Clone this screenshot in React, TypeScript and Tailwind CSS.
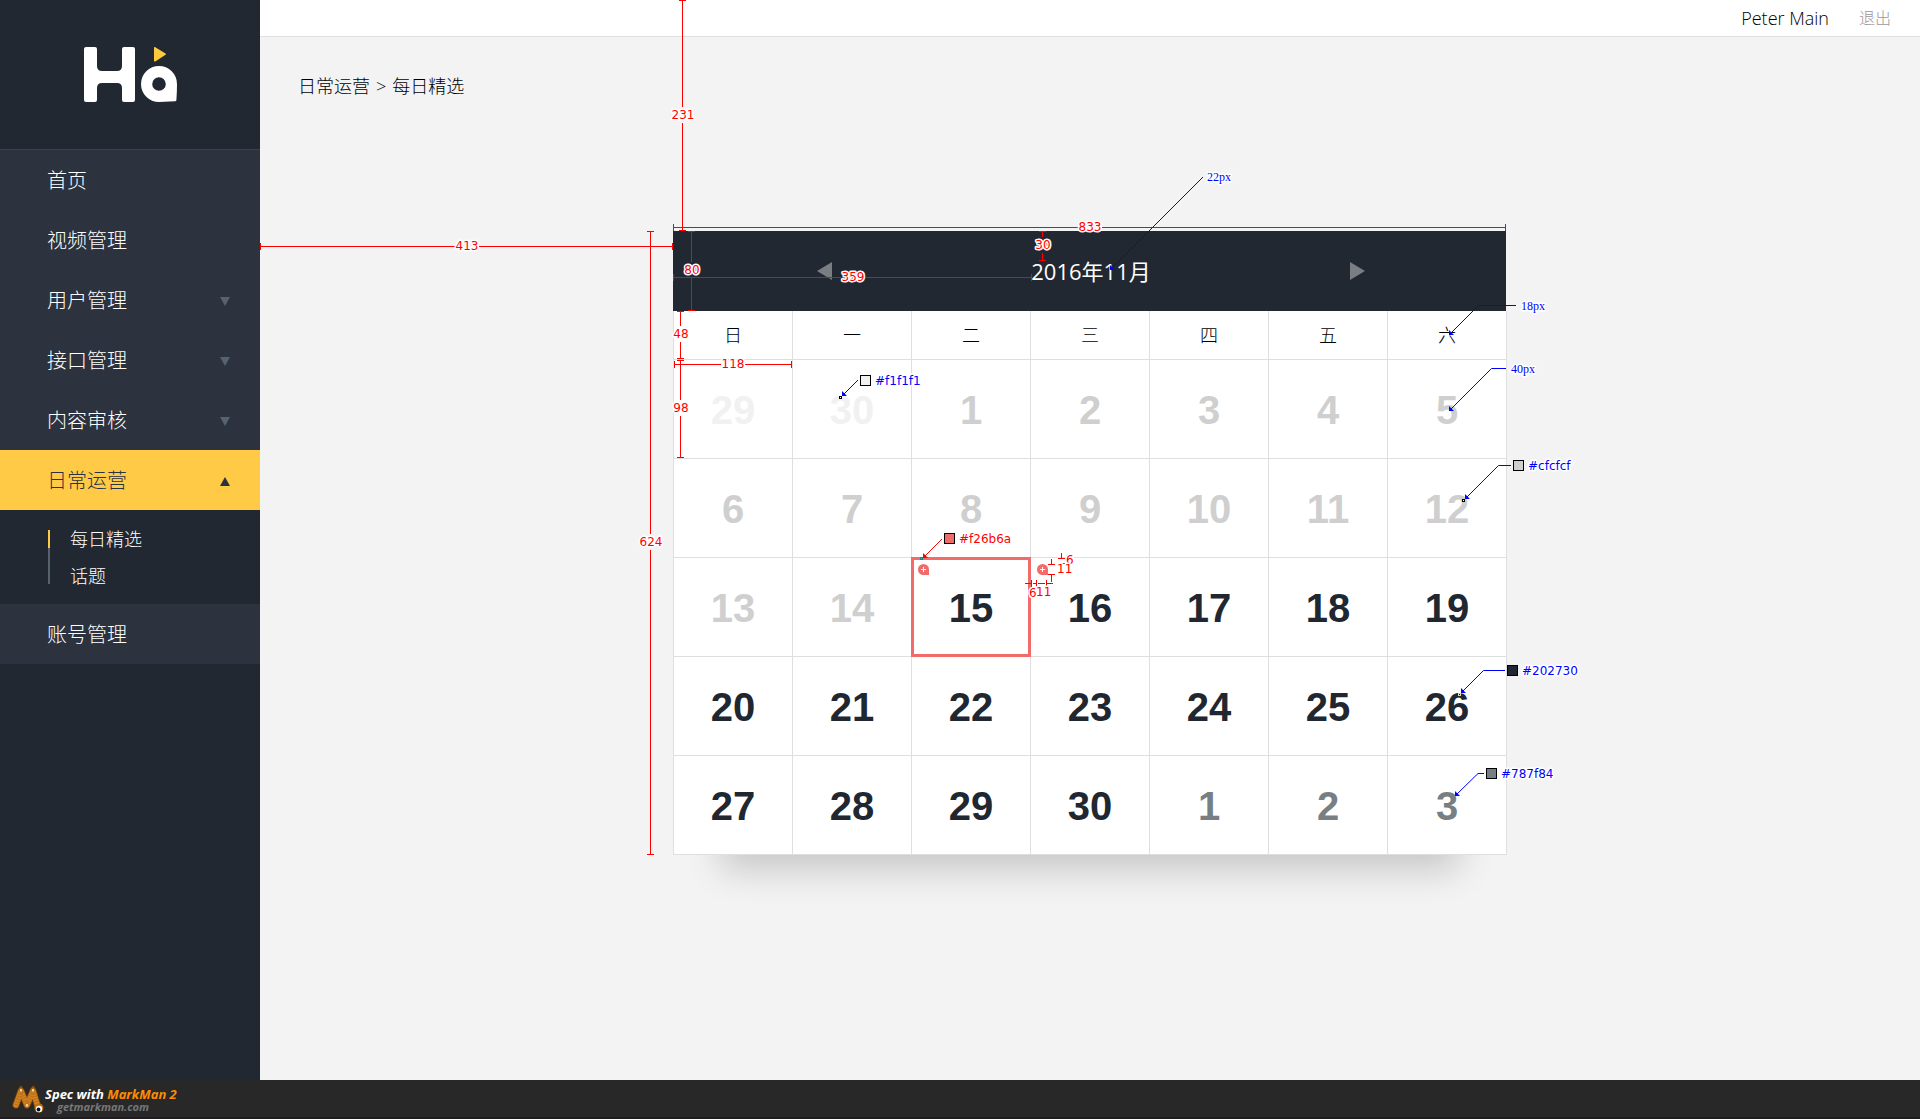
import type { ReactNode } from 'react';

const MENU_TOP = [
  { label: '首页', expandable: false },
  { label: '视频管理', expandable: false },
  { label: '用户管理', expandable: true },
  { label: '接口管理', expandable: true },
  { label: '内容审核', expandable: true },
];

const WEEKDAYS = ['日', '一', '二', '三', '四', '五', '六'];

type Tone = 'faint' | 'past' | 'open' | 'next';
type Day = { n: number; tone: Tone; selected?: boolean; add?: boolean };

const TONES: Record<Tone, string> = {
  faint: 'text-[#f1f1f1]',
  past: 'text-[#cfcfcf]',
  open: 'text-[#202730]',
  next: 'text-[#787f84]',
};

const range = (from: number, to: number, tone: Tone): Day[] =>
  Array.from({ length: to - from + 1 }, (_, i) => ({ n: from + i, tone }));

const DAYS: Day[] = [
  ...range(29, 30, 'faint'),
  ...range(1, 14, 'past'),
  { n: 15, tone: 'open', selected: true, add: true },
  { n: 16, tone: 'open', add: true },
  ...range(17, 30, 'open'),
  ...range(1, 3, 'next'),
];

const WEEKS = [0, 1, 2, 3, 4].map((w) => DAYS.slice(w * 7, w * 7 + 7));

function Logo() {
  return (
    <svg viewBox="0 0 94 56" className="h-14 w-[94px]" role="img" aria-label="Ha">
      <path
        fill="#fff"
        d="M2 0h9q2 0 2 2v17q0 5 5 5h15q5 0 5-5V2q0-2 2-2h9q2 0 2 2v51q0 2-2 2h-9q-2 0-2-2V41q0-5-5-5H18q-5 0-5 5v12q0 2-2 2H2q-2 0-2-2V2q0-2 2-2z"
      />
      <path
        fill="#fff"
        fillRule="evenodd"
        d="M75 19a18 18 0 0 1 18 18q0 8-.6 16 0 1.300-1.400 1.300L75 55a18 18 0 0 1 0-36zm0 11.200a6.800 6.800 0 1 0 0 13.600 6.800 6.800 0 0 0 0-13.600z"
      />
      <path fill="#ffc93c" d="M70 1q0-1.500 1.300-.8L81.500 6.600q.9.600 0 1.200L71.300 14.400q-1.300.7-1.300-.8z" />
    </svg>
  );
}

function Triangle({ up = false }: { up?: boolean }) {
  return (
    <svg viewBox="0 0 10 9" className="h-[9px] w-2.5" aria-hidden="true">
      <path d={up ? 'M0 9 5 0l5 9z' : 'M0 0h10L5 9z'} fill={up ? '#2c323e' : '#57626f'} />
    </svg>
  );
}

function MenuItem({ label, expandable }: { label: string; expandable: boolean }) {
  const box = 'flex h-15 w-full items-center justify-between bg-[#2c333e] pt-0.5 pr-[30px] pl-[47px] text-xl font-light text-white';
  if (expandable) {
    return (
      <button type="button" aria-expanded="false" className={box}>
        {label}
        <Triangle />
      </button>
    );
  }
  return (
    <a href="#" className={box}>
      {label}
    </a>
  );
}

function Sidebar() {
  return (
    <aside className="w-65 shrink-0 bg-[#212831]">
      <div className="flex h-[150px] items-center justify-center border-b border-[#3a424e] pl-0.5">
        <Logo />
      </div>
      <nav>
        {MENU_TOP.map((m) => (
          <MenuItem key={m.label} {...m} />
        ))}
        <button
          type="button"
          aria-expanded="true"
          className="flex h-15 w-full items-center justify-between bg-[#ffcb46] pt-0.5 pr-[30px] pl-[47px] text-xl font-light text-[#2c323e]"
        >
          日常运营
          <Triangle up />
        </button>
        <div className="flex h-[94px] items-center pl-12">
          <div className="flex h-[54px] w-0.5 flex-col bg-[#57626f]">
            <span className="h-[18px] bg-[#ffcb46]" />
          </div>
          <ul className="pl-5 text-lg leading-9 font-light text-white">
            <li className="h-[37px]">
              <a href="#" aria-current="page">每日精选</a>
            </li>
            <li className="h-9">
              <a href="#">话题</a>
            </li>
          </ul>
        </div>
        <MenuItem label="账号管理" expandable={false} />
      </nav>
    </aside>
  );
}

function AddBadge({ day }: { day: number }) {
  return (
    <button
      type="button"
      aria-label={`添加 ${day}`}
      className="absolute top-1.5 left-1.5 size-[11px] rounded-full rounded-br-none bg-[#f26b6a]"
    >
      <svg viewBox="0 0 11 11" className="size-[11px]" aria-hidden="true">
        <path d="M5.500 3v5M3 5.500h5" stroke="#fff" />
      </svg>
    </button>
  );
}

function Calendar() {
  return (
    <section className="relative mx-auto w-[834px] shadow-[0_62px_34px_-48px_rgba(0,0,0,0.19)]">
      <header className="mr-px flex h-20 items-center justify-between bg-[#212831] pr-[141px] pl-36">
        <button type="button" aria-label="上个月">
          <svg viewBox="0 0 15 18" className="h-[18px] w-[15px]">
            <path d="M15 0v18L0 9z" fill="#7a7e83" />
          </svg>
        </button>
        <h1 className="font-['Open_Sans','Noto_Sans_CJK_SC',sans-serif] text-[22px] text-white">2016年11月</h1>
        <button type="button" aria-label="下个月">
          <svg viewBox="0 0 15 18" className="h-[18px] w-[15px]">
            <path d="M0 0v18l15-9z" fill="#7a7e83" />
          </svg>
        </button>
      </header>
      <div className="border-l border-[#dfdfdf] bg-white">
        <table className="w-full table-fixed border-separate border-spacing-0">
          <thead>
            <tr>
              {WEEKDAYS.map((d) => (
                <th key={d} scope="col" className="h-[49px] border-r border-b border-[#dfdfdf] p-0 text-lg font-light text-black">
                  {d}
                </th>
              ))}
            </tr>
          </thead>
          <tbody>
            {WEEKS.map((week, w) => (
              <tr key={w}>
                {week.map((d) => (
                  <td key={d.n} className="relative h-[99px] border-r border-b border-[#dfdfdf] p-0">
                    <button
                      type="button"
                      className={`block h-[98px] w-full font-['Liberation_Sans',Arial,sans-serif] text-[40px] leading-[100px] font-bold ${TONES[d.tone]}`}
                    >
                      {d.n}
                    </button>
                    {d.selected && <span className="pointer-events-none absolute -inset-px z-10 border-3 border-[#f26b6a]" />}
                    {d.add && <AddBadge day={d.n} />}
                  </td>
                ))}
              </tr>
            ))}
          </tbody>
        </table>
      </div>
      <SpecOverlay />
    </section>
  );
}

const RED = '#ff0000';
const BLUE = '#0000ff';

function Note({ x, y, color = RED, serif, middle, children }: { x: number; y: number; color?: string; serif?: boolean; middle?: boolean; children: ReactNode }) {
  return (
    <text
      x={x}
      y={y + 4}
      fill={color}
      stroke="#fff"
      strokeWidth={3}
      strokeLinejoin="round"
      paintOrder="stroke"
      textAnchor={middle ? 'middle' : 'start'}
      className={serif ? "font-['Liberation_Serif',serif] text-xs" : "font-['DejaVu_Sans',sans-serif] text-xs"}
    >
      {children}
    </text>
  );
}

/* Dimension line with end caps and its length in the middle; gap is the half-width kept free for the label. */
function Measure({ x, y, to, vertical, at, label }: { x: number; y: number; to: number; vertical?: boolean; at: number; label: string }) {
  const gap = vertical ? 8 : 4 * label.length;
  const d = vertical
    ? `M${x + 0.5} ${y}V${at - gap}M${x + 0.5} ${at + gap}V${to + 1}M${x - 3} ${y + 0.5}h7M${x - 3} ${to + 0.5}h7`
    : `M${x} ${y + 0.5}H${at - gap}M${at + gap} ${y + 0.5}H${to + 1}M${x + 0.5} ${y - 3}v7M${to + 0.5} ${y - 3}v7`;
  return (
    <g>
      <path d={d} stroke={RED} fill="none" />
      <Note x={vertical ? x + 1 : at} y={vertical ? at : y} middle>
        {label}
      </Note>
    </g>
  );
}

/* Leader line that ends in an arrow head pointing down and left. */
function Leader({ d, x, y, color = BLUE }: { d: string; x: number; y: number; color?: string }) {
  return (
    <g>
      <path d={`${d}L${x + 1} ${y - 1}`} stroke={color} fill="none" />
      <path d={`M${x} ${y}v-5l5 5z`} fill={color} />
    </g>
  );
}

function Swatch({ x, y, fill, color = BLUE }: { x: number; y: number; fill: string; color?: string }) {
  return (
    <g>
      <rect x={x + 0.5} y={y + 0.5} width={10} height={10} fill={fill} stroke="#000" />
      <Note x={x + 15} y={y + 6} color={color}>
        {fill}
      </Note>
    </g>
  );
}

function Probe({ x, y, stroke = '#000', fill = '#fff' }: { x: number; y: number; stroke?: string; fill?: string }) {
  return <rect x={x - 0.5} y={y - 0.5} width={2} height={2} stroke={stroke} fill={fill} />;
}

/* Design annotations, drawn in artboard coordinates whose point (673, 231) is the calendar's corner. */
function SpecOverlay() {
  return (
    <svg
      viewBox="673 231 834 624"
      className="pointer-events-none absolute top-0 left-0 z-20 h-[624px] w-[834px] overflow-visible"
      aria-hidden="true"
    >
      <Measure vertical x={682} y={0} to={230} at={115} label="231" />
      <Measure x={260} y={246} to={672} at={467} label="413" />
      <Measure x={673} y={227} to={1505} at={1090} label="833" />
      <Measure vertical x={650} y={231} to={854} at={542} label="624" />
      <Measure vertical x={691} y={231} to={310} at={270} label="80" />
      <Measure x={673} y={277} to={1031} at={853} label="359" />
      <Measure vertical x={1042} y={231} to={260} at={245} label="30" />
      <Measure vertical x={680} y={311} to={358} at={334} label="48" />
      <Measure x={674} y={364} to={791} at={733} label="118" />
      <Measure vertical x={680} y={360} to={457} at={408} label="98" />

      <path
        d="M1061.500 553v6M1058 558.500h7M1058 563.500h7M1061.500 563v8M1051.500 559v5M1048 564.500h7M1048 574.500h7M1051.500 575v7M1025 583.500h7M1031.500 580v7M1033 583.500h3M1036.500 580v7M1038 583.500h7M1046.500 580v7M1047 583.500h6"
        stroke={RED}
        fill="none"
      />
      <Note x={1066} y={560}>6</Note>
      <Note x={1057} y={569}>11</Note>
      <Note x={1029} y={593}>6</Note>
      <Note x={1036} y={592}>11</Note>

      <Leader d="M1203 177" x={1110} y={270} />
      <Note serif x={1207} y={177} color={BLUE}>22px</Note>
      <Leader d="M1516 305.500H1478.500" x={1449} y={335} />
      <Note serif x={1521} y={306} color={BLUE}>18px</Note>
      <Leader d="M1506 368.500H1491.500" x={1449} y={411} />
      <Note serif x={1511} y={369} color={BLUE}>40px</Note>

      <Leader d="M858 380" x={842} y={396} />
      <Probe x={840} y={397} />
      <Swatch x={860} y={375} fill="#f1f1f1" />

      <Leader d="M1511 465.500H1498.500" x={1465} y={499} />
      <Probe x={1463} y={500} />
      <Swatch x={1513} y={460} fill="#cfcfcf" />

      <Leader d="M1505 670.500H1483.500" x={1461} y={693} />
      <Probe x={1459} y={694} fill="#000" stroke="#e8d9b0" />
      <Swatch x={1507} y={665} fill="#202730" />

      <Leader d="M1484 773.500H1478" x={1455} y={796} />
      <Swatch x={1486} y={768} fill="#787f84" />

      <Leader d="M942 539" x={923} y={558} color={RED} />
      <Probe x={921} y={558} stroke="#0e8a8a" fill="#f26b6a" />
      <Swatch x={944} y={533} fill="#f26b6a" color={RED} />
    </svg>
  );
}

function Mascot() {
  const worm = 'M4 19 9 5l6 14 6-14 5 16';
  return (
    <svg viewBox="0 0 32 28" className="h-7 w-8" aria-hidden="true">
      <path d={worm} fill="none" stroke="#7d430a" strokeWidth="7" strokeLinecap="round" strokeLinejoin="round" />
      <path d={worm} fill="none" stroke="#d08225" strokeWidth="5.500" strokeLinecap="round" strokeLinejoin="round" />
      <path d={worm} fill="none" stroke="#a9640f" strokeOpacity="0.6" strokeWidth="5.500" strokeDasharray="1 1.800" />
      <path d="M9 4v.5M15 19v.5M21 4v.5" stroke="#ffe9a8" strokeWidth="2" strokeLinecap="round" />
      <circle cx="27" cy="22" r="4.500" fill="#b96d15" />
      <circle cx="27" cy="23" r="3.200" fill="#fff" />
      <circle cx="26.500" cy="23.500" r="1.900" fill="#111" />
    </svg>
  );
}

export default function App() {
  return (
    <div className="flex min-h-screen flex-col bg-[#f3f3f3] font-['Open_Sans','Noto_Sans_CJK_SC',sans-serif]">
      <div className="flex grow">
        <Sidebar />
        <div className="min-w-0 grow">
          <header className="flex h-[37px] items-center justify-end gap-[30px] border-b border-[#dfdfdf] bg-white pr-[29px] font-light">
            <span className="text-lg text-black">Peter Main</span>
            <a href="#" className="text-base text-[#999]">退出</a>
          </header>
          <main>
            <nav aria-label="位置" className="flex h-[98px] items-center gap-1.5 pl-[38px] text-lg font-light text-black">
              <a href="#">日常运营</a>
              <span>&gt;</span>
              <span>每日精选</span>
            </nav>
            <div className="pt-24">
              <Calendar />
            </div>
          </main>
        </div>
      </div>
      <footer className="z-30 flex h-[39px] items-center border-b-2 border-[#201c20] bg-[#282828] pt-0.5 pl-3">
        <Mascot />
        <p className="pl-px text-[13px] leading-[14px] font-bold text-white italic">
          Spec with <span className="text-[#ff8c00]">MarkMan 2</span>
          <a href="#" className="block pl-3 text-[11px] leading-3 text-[#777]">getmarkman.com</a>
        </p>
      </footer>
    </div>
  );
}
